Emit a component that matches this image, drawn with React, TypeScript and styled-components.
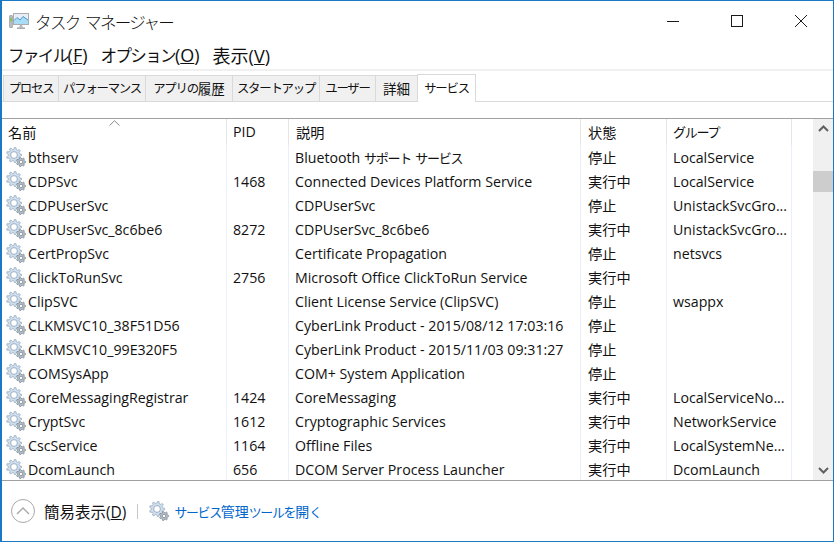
import type { ReactNode } from "react";
import styled, { createGlobalStyle } from "styled-components";

const Kana = styled.span`
  font-family: "Noto Sans CJK JP", sans-serif;
  font-size: 0.92em;
  letter-spacing: -0.1em;
  word-spacing: 0.2em;
`;

const Cjk = styled.span`
  font-family: "Noto Sans CJK JP", sans-serif;
`;

type Service = [string, string, ReactNode, string, string];

const services: Service[] = [
  ["bthserv", "", <>Bluetooth <Kana>サポート サービス</Kana></>, "停止", "LocalService"],
  ["CDPSvc", "1468", "Connected Devices Platform Service", "実行中", "LocalService"],
  ["CDPUserSvc", "", "CDPUserSvc", "停止", "UnistackSvcGro..."],
  ["CDPUserSvc_8c6be6", "8272", "CDPUserSvc_8c6be6", "実行中", "UnistackSvcGro..."],
  ["CertPropSvc", "", "Certificate Propagation", "停止", "netsvcs"],
  ["ClickToRunSvc", "2756", "Microsoft Office ClickToRun Service", "実行中", ""],
  ["ClipSVC", "", "Client License Service (ClipSVC)", "停止", "wsappx"],
  ["CLKMSVC10_38F51D56", "", "CyberLink Product - 2015/08/12 17:03:16", "停止", ""],
  ["CLKMSVC10_99E320F5", "", "CyberLink Product - 2015/11/03 09:31:27", "停止", ""],
  ["COMSysApp", "", "COM+ System Application", "停止", ""],
  ["CoreMessagingRegistrar", "1424", "CoreMessaging", "実行中", "LocalServiceNo..."],
  ["CryptSvc", "1612", "Cryptographic Services", "実行中", "NetworkService"],
  ["CscService", "1164", "Offline Files", "実行中", "LocalSystemNe..."],
  ["DcomLaunch", "656", "DCOM Server Process Launcher", "実行中", "DcomLaunch"],
];

const tabs: [ReactNode, number][] = [
  [<Kana>プロセス</Kana>, 55],
  [<Kana>パフォーマンス</Kana>, 87],
  [<><Kana>アプリの</Kana>履歴</>, 87],
  [<Kana>スタートアップ</Kana>, 87],
  [<Kana>ユーザー</Kana>, 56],
  ["詳細", 42],
];

function toothPath(cx: number, cy: number, r: number, count: number) {
  let d = "";
  for (let i = 0; i < count; i++) {
    const a = (i / count) * Math.PI * 2;
    const s = Math.PI / count / 2;
    const pts = [
      [a - s * 1.3, r * 0.76],
      [a - s * 0.6, r],
      [a + s * 0.6, r],
      [a + s * 1.3, r * 0.76],
    ];
    pts.forEach(([t, l], j) => {
      const x = (cx + Math.cos(t) * l).toFixed(2);
      const y = (cy + Math.sin(t) * l).toFixed(2);
      d += `${i === 0 && j === 0 ? "M" : "L"}${x} ${y} `;
    });
  }
  return d + "Z";
}

function Gears({ size = 20 }: { size?: number }) {
  return (
    <svg width={size} height={size} viewBox="0 0 20 20">
      <path d={toothPath(8, 8, 7.6, 9)} fill="#cfdeec" stroke="#8fa5ba" strokeWidth="0.7" />
      <circle cx="8" cy="8" r="3.4" fill="#fff" stroke="#8ea6bc" strokeWidth="0.9" />
      <path d={toothPath(15, 15, 4.6, 7)} fill="#b4bec8" stroke="#75828e" strokeWidth="0.7" />
      <circle cx="15" cy="15" r="1.7" fill="#fff" stroke="#75828e" strokeWidth="0.7" />
    </svg>
  );
}

function AppIcon() {
  return (
    <svg width="20" height="18" viewBox="0 0 20 18">
      <rect x="0.5" y="3.5" width="3" height="12" rx="0.5" fill="#b8bcc0" stroke="#8e9296" strokeWidth="0.6" />
      <rect x="1.2" y="6" width="1.6" height="3.5" fill="#7fc24a" />
      <rect x="4.5" y="1.5" width="15" height="11" fill="#e8eef4" stroke="#a9adb1" />
      <path d="M5 11 L5 8.5 L8 5.5 L11 8 L14 4.5 L19 8 L19 12 L5 12 Z" fill="#a9dcf5" />
      <path d="M5 8.5 L8 5.5 L11 8 L14 4.5 L19 8" fill="none" stroke="#3f8fc9" strokeWidth="0.9" />
      <path d="M11 13 h2 l1 2.5 h-4 Z" fill="#b4b8bc" />
      <rect x="8" y="15.5" width="8" height="1.4" fill="#9ea2a6" />
    </svg>
  );
}

export default function App() {
  return (
    <Window>
      <GlobalStyle />
      <TitleBar>
        <TitleIcon><AppIcon /></TitleIcon>
        <Title><Kana>タスク マネージャー</Kana></Title>
        <Controls>
          <Control>
            <svg width="12" height="12" viewBox="0 0 12 12"><path d="M0 6.5 H12" stroke="#1a1a1a" /></svg>
          </Control>
          <Control>
            <svg width="12" height="12" viewBox="0 0 12 12"><rect x="0.5" y="0.5" width="11" height="11" fill="none" stroke="#1a1a1a" /></svg>
          </Control>
          <Control>
            <svg width="12" height="12" viewBox="0 0 12 12"><path d="M0 0 L12 12 M12 0 L0 12" stroke="#1a1a1a" /></svg>
          </Control>
        </Controls>
      </TitleBar>
      <MenuBar>
        <span><Kana>ファイル</Kana>(<u>F</u>)</span>
        <span><Kana>オプション</Kana>(<u>O</u>)</span>
        <span><Cjk>表示</Cjk>(<u>V</u>)</span>
      </MenuBar>
      <TabStrip>
        {tabs.map(([label, width], i) => (
          <Tab key={i} $width={width}>{label}</Tab>
        ))}
        <ActiveTab $width={59}><Kana>サービス</Kana></ActiveTab>
      </TabStrip>
      <TableArea>
        <Table>
          <HeaderRow>
            <HeaderCell>
              名前
              <SortArrow width="11" height="6" viewBox="0 0 11 6">
                <path d="M0.5 5.5 L5.5 0.8 L10.5 5.5" fill="none" stroke="#8a8a8a" />
              </SortArrow>
            </HeaderCell>
            <HeaderCell>PID</HeaderCell>
            <HeaderCell>説明</HeaderCell>
            <HeaderCell>状態</HeaderCell>
            <HeaderCell><Kana>グループ</Kana></HeaderCell>
            <HeaderCell />
          </HeaderRow>
          {services.map(([name, pid, desc, state, group]) => (
            <Row key={name}>
              <NameCell>
                <Gears />
                <span>{name}</span>
              </NameCell>
              <Cell>{pid}</Cell>
              <Cell>{desc}</Cell>
              <Cell>{state}</Cell>
              <Cell>{group}</Cell>
              <Cell />
            </Row>
          ))}
        </Table>
        <Scrollbar>
          <ScrollButton>
            <svg width="11" height="7" viewBox="0 0 11 7"><path d="M1 6 L5.5 1.5 L10 6" fill="none" stroke="#606060" strokeWidth="2" /></svg>
          </ScrollButton>
          <ScrollTrack>
            <ScrollThumb />
          </ScrollTrack>
          <ScrollButton>
            <svg width="11" height="7" viewBox="0 0 11 7"><path d="M1 1 L5.5 5.5 L10 1" fill="none" stroke="#606060" strokeWidth="2" /></svg>
          </ScrollButton>
        </Scrollbar>
      </TableArea>
      <Footer>
        <CollapseButton>
          <svg width="14" height="8" viewBox="0 0 14 8"><path d="M1 7 L7 1 L13 7" fill="none" stroke="#a8a8a8" strokeWidth="1.4" /></svg>
        </CollapseButton>
        <FooterLabel><Cjk>簡易表示</Cjk>(<u>D</u>)</FooterLabel>
        <FooterDivider />
        <Gears />
        <FooterLink>
          <Kana>サービス</Kana>管理<Kana>ツールを</Kana>開<Kana>く</Kana>
        </FooterLink>
      </Footer>
    </Window>
  );
}

const GlobalStyle = createGlobalStyle`
  html, body {
    margin: 0;
    padding: 0;
    background: #fff;
  }
  * {
    box-sizing: border-box;
  }
`;

const Window = styled.div`
  width: 834px;
  height: 542px;
  border: 1px solid #1a78c4;
  border-left-width: 2px;
  background: #fff;
  display: flex;
  flex-direction: column;
  overflow: hidden;
  color: #111;
  font-family: "Open Sans", "Noto Sans CJK JP", sans-serif;
  font-size: 14.2px;
`;

const TitleBar = styled.div`
  height: 39px;
  display: flex;
  align-items: center;
  padding-left: 7px;
  flex: none;
`;

const TitleIcon = styled.div`
  display: flex;
  width: 26px;
`;

const Title = styled.div`
  font-size: 18px;
  font-family: "Noto Sans CJK JP", sans-serif;
  font-weight: 300;
  flex: 1;
`;

const Controls = styled.div`
  display: flex;
  align-self: flex-start;
`;

const Control = styled.div`
  width: 64px;
  height: 40px;
  display: flex;
  align-items: center;
  justify-content: center;
`;

const MenuBar = styled.div`
  height: 29px;
  display: flex;
  align-items: center;
  gap: 13px;
  padding-left: 6px;
  flex: none;
  font-size: 18px;
`;

const TabStrip = styled.div`
  height: 33px;
  flex: none;
  display: flex;
  align-items: flex-end;
  padding-left: 1px;
  border-top: 2px solid #f0f0f0;
  border-bottom: 1px solid #d9d9d9;
`;

const Tab = styled.div<{ $width: number }>`
  width: ${(p) => p.$width}px;
  height: 26px;
  padding-bottom: 1px;
  background: #f0f0f0;
  border: 1px solid #d9d9d9;
  border-right: 0;
  border-bottom: 0;
  display: flex;
  align-items: center;
  justify-content: center;
  font-size: 13.5px;
  font-family: "Noto Sans CJK JP", sans-serif;
  white-space: nowrap;
`;

const ActiveTab = styled(Tab)`
  height: 28px;
  margin-bottom: -1px;
  background: #fff;
  border-right: 1px solid #d9d9d9;
`;

const TableArea = styled.div`
  margin-top: 16px;
  flex: none;
  height: 363px;
  display: flex;
  border-top: 1px solid #a0a0a0;
  border-bottom: 1px solid #a0a0a0;
`;

const Table = styled.div`
  flex: 1;
  min-width: 0;
  overflow: hidden;
`;

const columns = "225px 62px 292px 86px 125px 1fr";

const HeaderRow = styled.div`
  display: grid;
  grid-template-columns: ${columns};
  height: 26px;
`;

const Row = styled.div`
  display: grid;
  grid-template-columns: ${columns};
  height: 24px;
`;

const HeaderCell = styled.div`
  position: relative;
  padding: 3px 0 0 6px;
  border-right: 1px solid #e5e5e5;
  &:nth-child(3),
  &:nth-child(4) {
    padding-left: 7px;
  }
  &:last-child {
    border-right: 0;
  }
`;

const SortArrow = styled.svg`
  position: absolute;
  top: 1px;
  left: 107px;
`;

const Cell = styled.div`
  padding-left: 6px;
  border-right: 1px solid #e9f0f9;
  display: flex;
  align-items: center;
  white-space: pre;
  overflow: hidden;
  &:nth-child(4) {
    padding-left: 7px;
  }
  &:last-child {
    border-right: 0;
  }
`;

const NameCell = styled(Cell)`
  padding-left: 4px;
  gap: 2px;
`;

const Scrollbar = styled.div`
  width: 20px;
  flex: none;
  background: #f0f0f0;
  display: flex;
  flex-direction: column;
`;

const ScrollButton = styled.div`
  height: 19px;
  flex: none;
  display: flex;
  align-items: center;
  justify-content: center;
`;

const ScrollTrack = styled.div`
  flex: 1;
  padding-top: 33px;
`;

const ScrollThumb = styled.div`
  height: 21px;
  background: #cdcdcd;
`;

const Footer = styled.div`
  flex: 1;
  display: flex;
  align-items: center;
  padding-left: 9px;
`;

const CollapseButton = styled.div`
  width: 24px;
  height: 24px;
  border: 1px solid #a8a8a8;
  border-radius: 50%;
  display: flex;
  align-items: center;
  justify-content: center;
`;

const FooterLabel = styled.span`
  margin-left: 9px;
  font-size: 15.5px;
`;

const FooterDivider = styled.div`
  width: 1px;
  height: 15px;
  background: #c8c8c8;
  margin: 0 11px;
`;

const FooterLink = styled.a`
  margin-left: 5px;
  color: #0066cc;
  font-family: "Noto Sans CJK JP", sans-serif;
  font-size: 14px;
  white-space: pre;
`;
